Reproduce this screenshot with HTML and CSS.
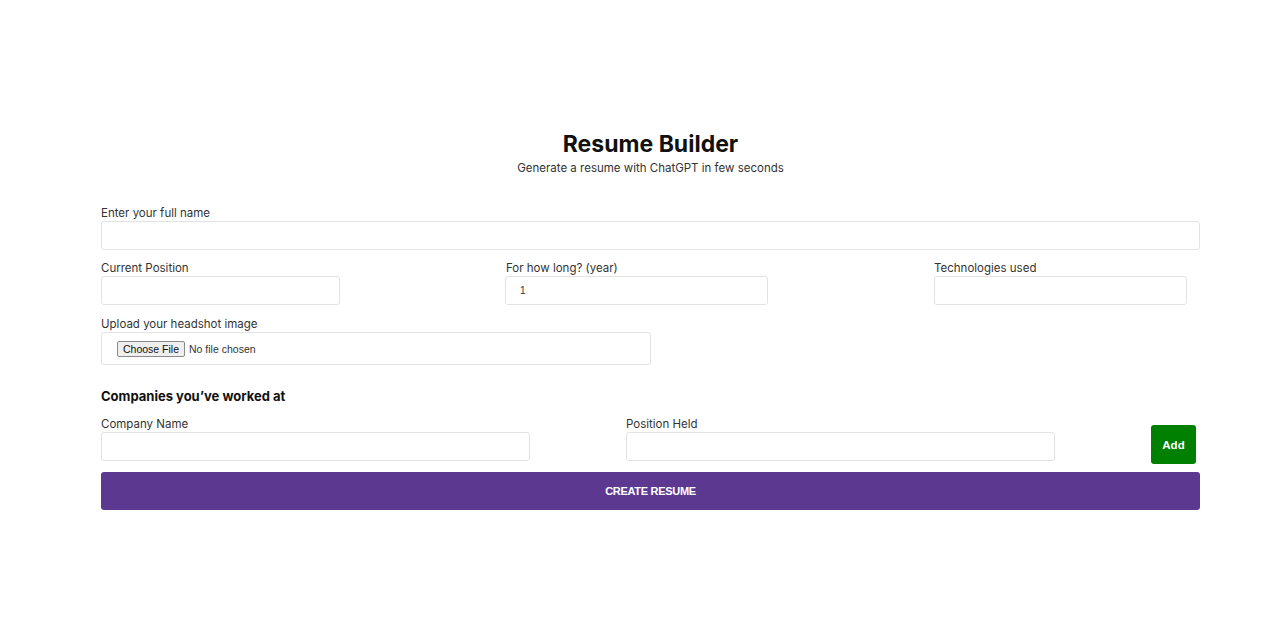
FILE: index.html
```html
<!DOCTYPE html>
<html>
<head>
<meta charset="utf-8">
<link rel="stylesheet" href="styles.css">
</head>
<body>
<div class="app">
  <h1 class="title">Resume Builder</h1>
  <p class="subtitle">Generate a resume with ChatGPT in few seconds</p>
  <form class="form">
    <label class="field">
      <span class="label">Enter your full name</span>
      <input class="input full" type="text">
    </label>
    <div class="row3">
      <label class="field">
        <span class="label">Current Position</span>
        <input class="input w-pos" type="text">
      </label>
      <label class="field">
        <span class="label">For how long? (year)</span>
        <input class="input w-years" type="text" value="1">
      </label>
      <label class="field">
        <span class="label">Technologies used</span>
        <input class="input w-tech" type="text">
      </label>
    </div>
    <label class="field">
      <span class="label">Upload your headshot image</span>
      <div class="file-box"><span class="file-btn">Choose File</span><span class="file-text">No file chosen</span></div>
    </label>
    <h3 class="section">Companies you’ve worked at</h3>
    <div class="row-company">
      <label class="field">
        <span class="label">Company Name</span>
        <input class="input w-company" type="text">
      </label>
      <label class="field">
        <span class="label">Position Held</span>
        <input class="input w-company" type="text">
      </label>
      <button type="button" class="add-btn">Add</button>
    </div>
    <button type="button" class="create-btn">CREATE RESUME</button>
  </form>
</div>
</body>
</html>
```

FILE: styles.css
```css
* { box-sizing: border-box; }
body {
  margin: 0;
  background: #fff;
  font-family: "Inter", "DejaVu Sans", sans-serif;
  color: #222;
}
.app {
  width: 1099px;
  margin-left: 101px;
  padding-top: 129px;
}
.title {
  margin: 0;
  text-align: center;
  font-size: 23px;
  font-weight: 700;
  color: #111;
  line-height: 30px;
}
.subtitle {
  margin: 2px 0 0;
  text-align: center;
  font-size: 11.5px;
  line-height: 14px;
  color: #333;
}
.form {
  display: flex;
  flex-direction: column;
  margin-top: 30px;
}
.field {
  display: flex;
  flex-direction: column;
}
.label {
  font-size: 11.5px;
  line-height: 16px;
  color: #333;
}
.input {
  height: 29px;
  border: 1px solid #e3e3e3;
  border-radius: 3px;
  padding: 0 14px;
  font-size: 10px;
  font-family: "Liberation Sans", Arial, sans-serif;
  color: #333;
  outline: none;
}
.full { width: 100%; }
.row3 {
  display: flex;
  justify-content: space-between;
  margin-top: 10px;
  padding-right: 13px;
}
.w-pos { width: 239px; }
.w-years { width: 263px; margin-left: -1px; }
.w-tech { width: 253px; }
.row3 + .field { margin-top: 11px; }
.file-box {
  width: 550px;
  height: 33px;
  border: 1px solid #e3e3e3;
  border-radius: 3px;
  display: flex;
  align-items: center;
  padding-left: 15px;
  font-family: "Liberation Sans", Arial, sans-serif;
  font-size: 10.5px;
}
.file-btn {
  border: 1px solid #8a8a8a;
  background: #efefef;
  border-radius: 2px;
  padding: 1px 5px;
  color: #111;
  line-height: 12px;
}
.file-text {
  margin-left: 4px;
  color: #333;
}
.section {
  margin: 21px 0 0;
  font-size: 13px;
  font-weight: 700;
  line-height: 20px;
  color: #111;
}
.row-company {
  display: flex;
  align-items: flex-end;
  margin-top: 10px;
}
.w-company { width: 429px; }
.row-company .field + .field { margin-left: 96px; }
.add-btn {
  margin-left: 96px;
  margin-bottom: -3px;
  width: 45px;
  height: 39px;
  background: #008000;
  color: #fff;
  border: none;
  border-radius: 3px;
  font-family: "Liberation Sans", Arial, sans-serif;
  font-weight: 700;
  font-size: 11.5px;
}
.create-btn {
  margin-top: 11px;
  height: 38px;
  width: 100%;
  background: #5d3891;
  color: #fff;
  border: none;
  border-radius: 3px;
  font-family: "Liberation Sans", Arial, sans-serif;
  font-weight: 700;
  font-size: 11px;
  letter-spacing: -0.3px;
}
```
